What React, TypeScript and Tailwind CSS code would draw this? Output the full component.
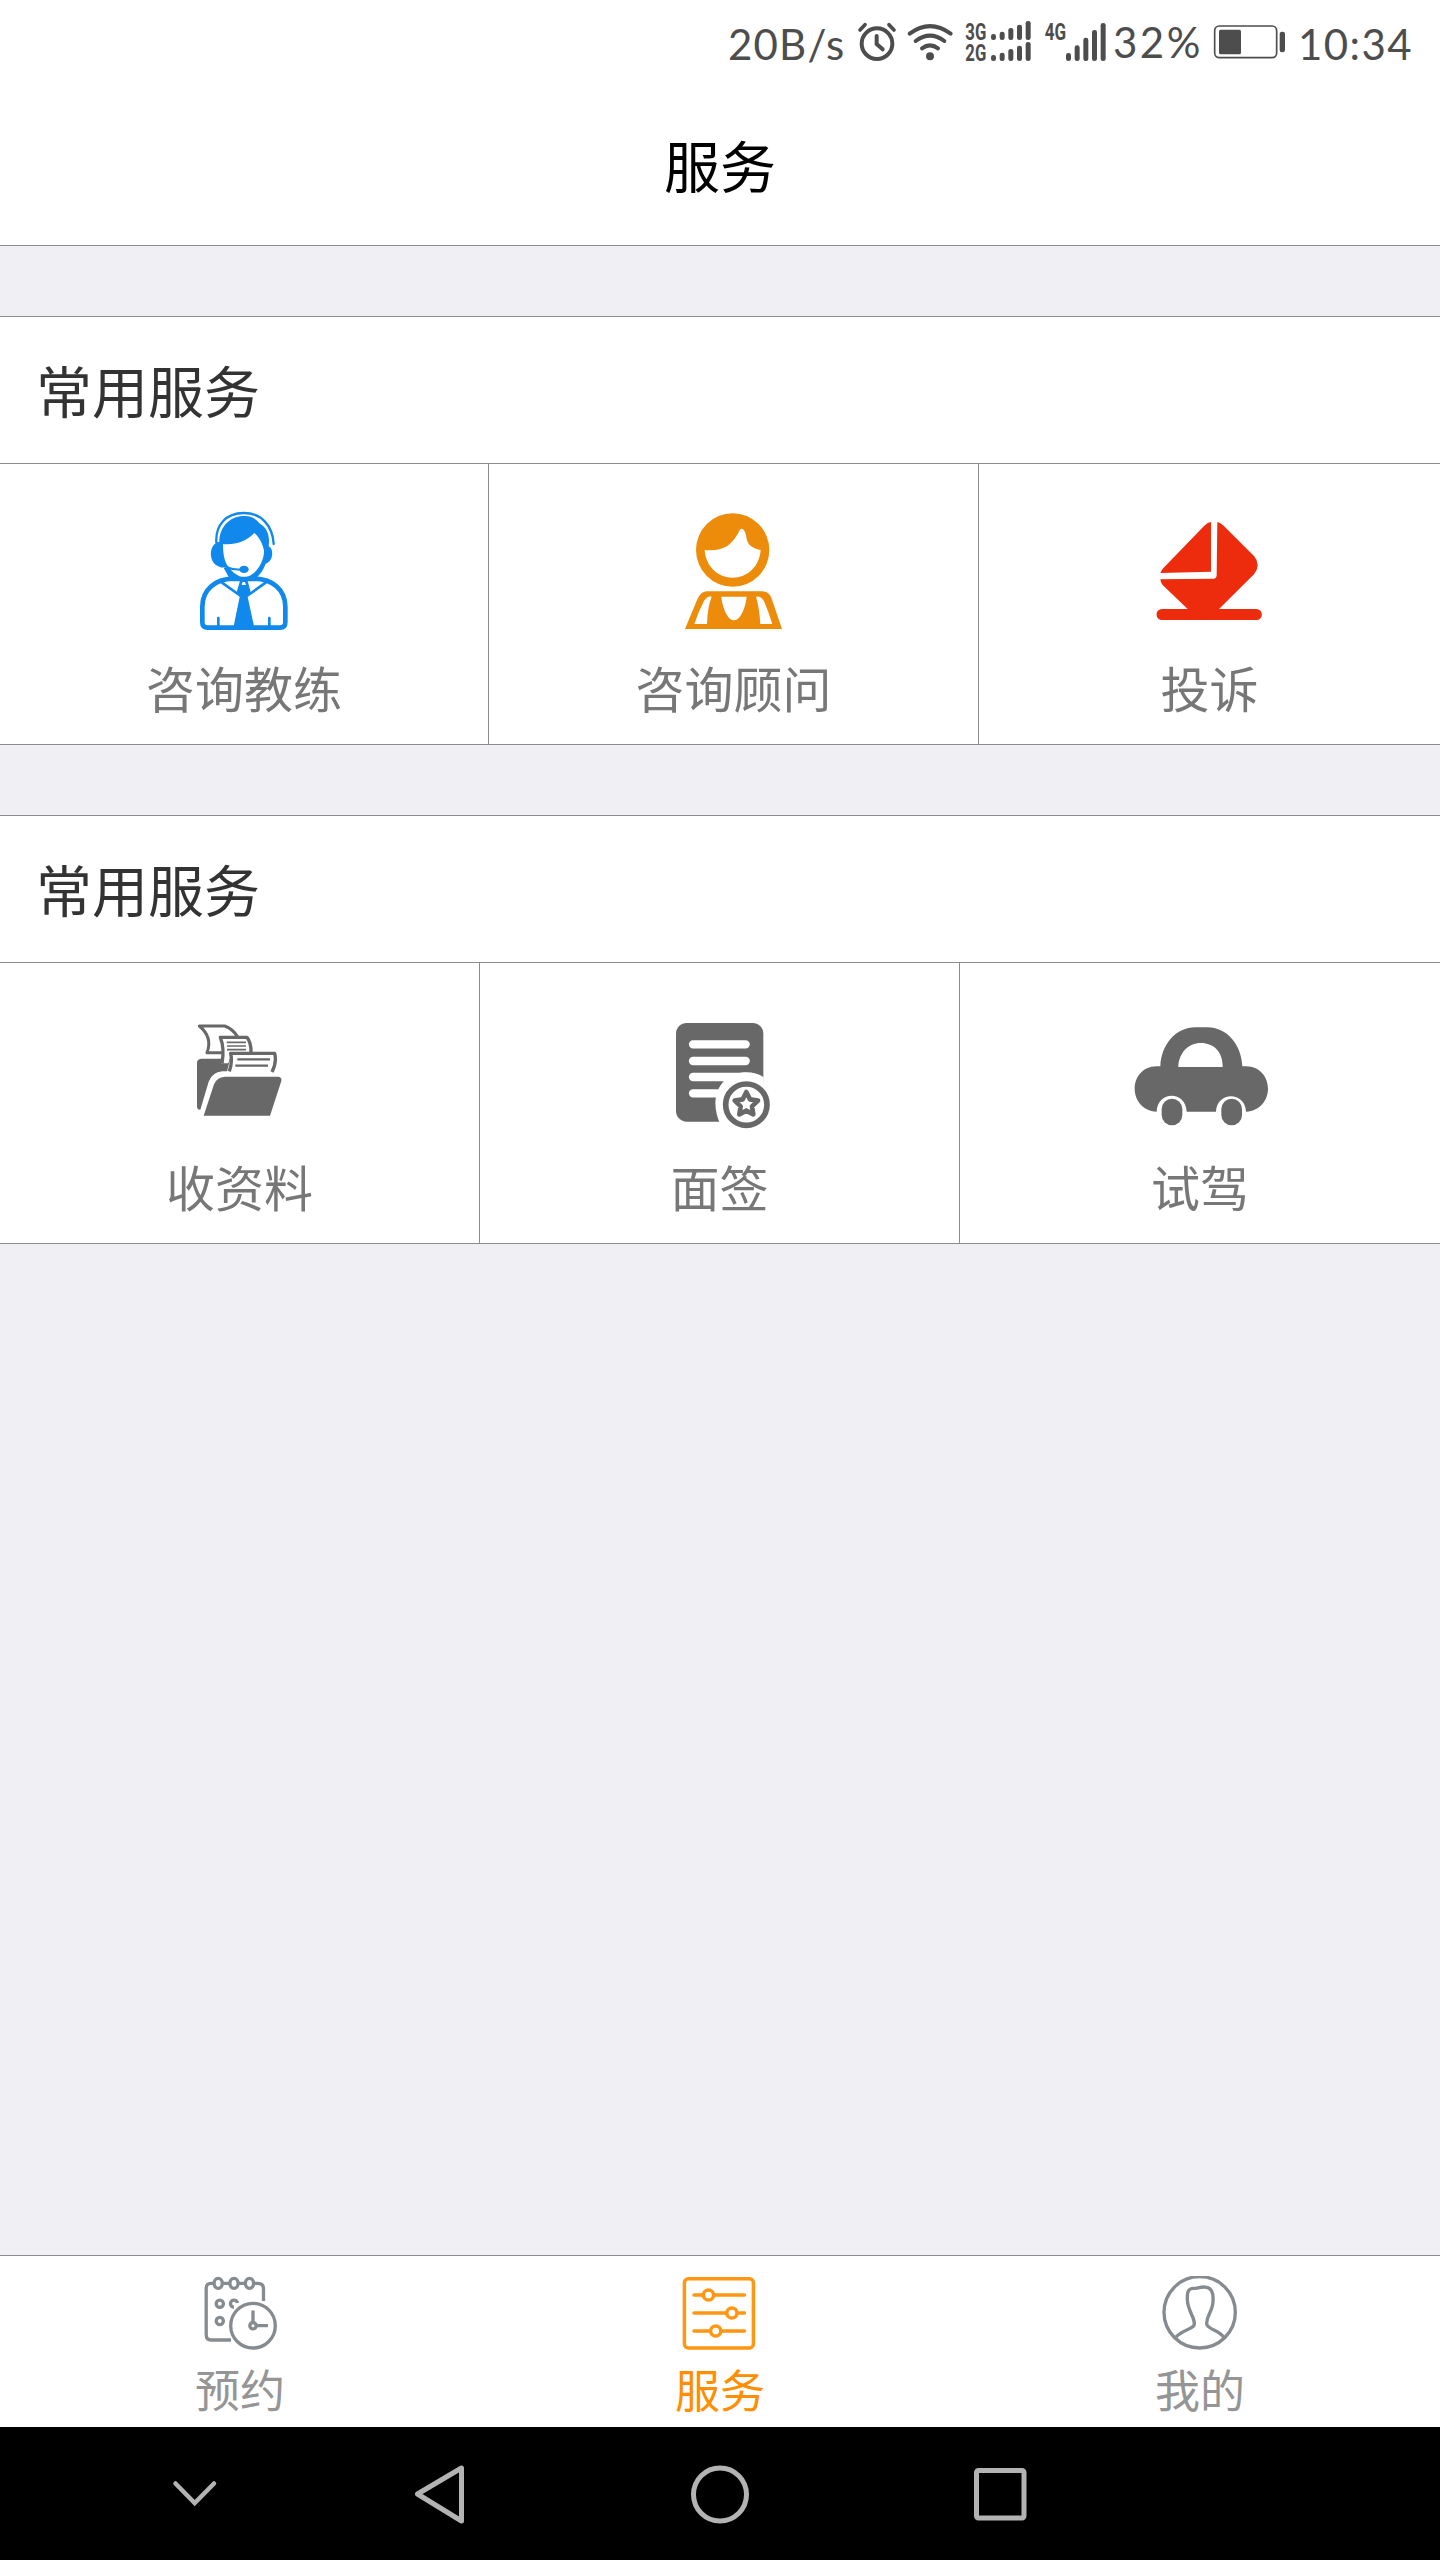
import type { ReactNode } from "react";

const StatusBar = () => (
  <div className="flex h-[90px] pl-[727px] text-[#4d4d4d] font-[Lato,sans-serif] text-[42px] leading-[89px] whitespace-nowrap">
    <span className="w-[128px] pl-px tracking-[1.2px]">20B/s</span>
    <svg className="w-[45px] h-[90px] shrink-0" viewBox="435 0 135 270" fill="none" stroke="currentColor" strokeLinecap="round">
      <circle cx="501" cy="131" r="46" strokeWidth="12" />
      <path d="M500 108V132L518 148" strokeWidth="12" />
      <path d="M450 90L465 74M552 90L537 74" strokeWidth="11" />
    </svg>
    <svg className="w-[60px] h-[90px] shrink-0" viewBox="570 0 180 270" fill="none" stroke="currentColor" strokeWidth="12" strokeLinecap="round">
      <path d="M599 101Q660 56 722 101M617 123Q660 91 703 123M636 145Q660 127 684 145" />
      <circle cx="660" cy="169" r="12" fill="currentColor" stroke="none" />
    </svg>
    <svg className="w-[75px] h-[90px] shrink-0" viewBox="750 0 225 270" fill="currentColor">
      <g className="font-[Roboto,sans-serif] font-bold" fontSize="71">
        <text x="766" y="120" textLength="63" lengthAdjust="spacingAndGlyphs">3G</text>
        <text x="766" y="183" textLength="63" lengthAdjust="spacingAndGlyphs">2G</text>
      </g>
      {[120, 183].map((y) => (
        <g key={y}>
          <rect x="843" y={y - 18} width="15" height="18" rx="7" />
          <rect x="869" y={y - 25} width="15" height="25" rx="7" />
          <rect x="895" y={y - 36} width="15" height="36" rx="7" />
          <rect x="921" y={y - 46} width="15" height="46" rx="7" />
          <rect x="947" y={y - 57} width="15" height="57" rx="7" />
        </g>
      ))}
    </svg>
    <svg className="w-[75px] h-[90px] shrink-0" viewBox="-15 0 225 270" fill="currentColor">
      <text x="14" y="120" textLength="64" lengthAdjust="spacingAndGlyphs" fontSize="71" className="font-[Roboto,sans-serif] font-bold">4G</text>
      <rect x="78" y="159" width="15" height="24" rx="7" />
      <rect x="104" y="136" width="15" height="47" rx="7" />
      <rect x="130" y="113" width="15" height="70" rx="7" />
      <rect x="156" y="90" width="15" height="93" rx="7" />
      <rect x="182" y="69" width="15" height="114" rx="7" />
    </svg>
    <span className="w-[98px] pl-[3px] leading-[85px] tracking-[2.5px]">32%</span>
    <svg className="w-[84px] h-[90px] shrink-0" viewBox="504 0 252 270" fill="none" stroke="currentColor">
      <rect x="524" y="78" width="186" height="95" rx="14" strokeWidth="5" />
      <rect x="537" y="89" width="66" height="74" rx="5" fill="currentColor" stroke="none" />
      <rect x="719" y="95" width="16" height="62" rx="7" fill="currentColor" stroke="none" />
    </svg>
    <span className="pl-[6px] tracking-[1.4px]">10:34</span>
  </div>
);

const CoachIcon = () => (
  <svg className="size-[150px]" viewBox="-33 0 450 450" fill="#1088ec">
    <path d="M109 157C106 105 138 69 191 69C246 69 278 109 281 162" fill="none" stroke="#1088ec" strokeWidth="7" strokeLinecap="round" />
    <path
      fillRule="evenodd"
      d="M118 155C119 108 151 78 193 78C219 78 231 91 240 101C263 114 270 139 266 169C281 174 282 213 257 221C251 239 240 253 231 262L193 270L148 264L131 234L145 229C155 246 175 261 191 262C225 262 254 213 252 181C247 157 234 138 223 129C197 156 165 165 129 162C129 193 134 215 144 229C137 233 126 234 118 230C83 220 85 160 118 155Z"
    />
    <path d="M137 231Q160 240 187 239" fill="none" stroke="#1088ec" strokeWidth="6" />
    <ellipse cx="192" cy="238" rx="14" ry="11" />
    <path d="M159 266C105 267 67 300 67 350V397Q67 413 83 413H300Q316 413 316 397V350C316 300 278 267 224 266" fill="none" stroke="#1088ec" strokeWidth="14" />
    <path d="M148 260H234L226 274H157Z" />
    <path d="M126 278L178 315M257 278L205 315M115 384V407M268 384V407" fill="none" stroke="#1088ec" strokeWidth="8" strokeLinecap="round" />
    <path d="M180 272H203L212 307L203 321L223 413H160L179 321L170 307Z" />
    <path d="M188 276H195L198 285H185Z" fill="#fff" />
  </svg>
);

const ConsultantIcon = () => (
  <svg className="size-[150px]" viewBox="-3 0 450 450" fill="#ed8c0a">
    <circle cx="218" cy="180" r="110" />
    <path d="M134 180C185 185 211 169 231 135C239 123 238 117 245 116C252 117 258 128 260 147C264 167 282 177 302 180C299 229 262 263 218 263C174 263 137 229 134 180Z" fill="#fff" />
    <path
      fillRule="evenodd"
      d="M139 304H307Q325 304 334 323L366 417H75L112 328Q122 306 139 304ZM155 320C145 318 139 323 132 333Q115 365 103 402H141Q142 353 155 320ZM184 320H260C257 353 241 391 222 391C203 391 187 353 184 320ZM288 320Q298 352 301 402H337Q326 366 312 334Q303 317 288 320Z"
    />
  </svg>
);

const ComplaintIcon = () => (
  <svg className="size-[150px]" viewBox="15 0 450 450" fill="#ec2c0d">
    <path d="M243 96V245L91 249Q93 241 101 233L223 107Q233 97 243 96Z" />
    <path d="M262 96Q271 98 281 107L372 198Q394 224 372 253L267 357H379A16 16 0 0 1 379 390H96A16 16 0 0 1 96 357H173L98 285Q91 276 91 268L250 266Q260 266 260 255Z" />
  </svg>
);

const FolderIcon = () => (
  <svg className="size-[150px]" viewBox="-15 -33 450 450" fill="#686868">
    <path d="M81 320V188Q81 177 94 176H181L171 214H157Q126 217 116 245L91 329Q82 330 81 320Z" />
    <path d="M88 78H164Q187 86 202 109L206 158H111Q129 112 88 78Z" fill="#fff" stroke="#686868" strokeWidth="9" strokeLinejoin="round" />
    <path d="M151 112H231Q245 128 243 158L183 162L175 190H153Q164 147 151 112Z" fill="#fff" />
    <path d="M156 190Q164 145 151 112H231Q244 128 243 158" fill="none" stroke="#686868" strokeWidth="10" strokeLinejoin="round" />
    <path d="M170 127H228M171 138H228M171 149H228" stroke="#686868" strokeWidth="5" />
    <path d="M178 214Q188 187 182 160H314Q321 186 306 216" fill="#fff" stroke="#686868" strokeWidth="10" strokeLinejoin="round" />
    <path d="M202 178H300M196 197H294" stroke="#686868" strokeWidth="7" />
    <path d="M165 230H324Q338 231 333 246L300 347H101L132 253Q140 232 165 230Z" />
  </svg>
);

const ContractIcon = () => (
  <svg className="size-[150px]" viewBox="-15 -33 450 450" fill="#686868">
    <rect x="78" y="69" width="262" height="296" rx="32" />
    <path d="M129 133H287M129 183H287M129 231H287M129 280H230" stroke="#fff" strokeWidth="25" strokeLinecap="round" />
    <path d="M341 232C311 211 259 211 226 239C190 272 190 322 208 367H345Z" fill="#fff" />
    <circle cx="289" cy="314" r="62" fill="#fff" stroke="#686868" strokeWidth="17" />
    <path d="M289 276L300 298L324 302L306 319L310 343L289 332L268 343L272 319L254 302L278 298Z" fill="#fff" stroke="#686868" strokeWidth="14" strokeLinejoin="round" />
  </svg>
);

const CarIcon = () => (
  <svg className="size-[150px]" viewBox="15 -33 450 450" fill="#686868">
    <path
      fillRule="evenodd"
      d="M121 199C124 131 170 82 225 82H263C318 82 364 131 367 199H378C465 201 467 329 378 335C376 273 290 273 288 335H200C198 271 112 271 110 335C21 329 23 201 110 199ZM175 201H308C309 157 282 129 243 129C204 129 176 160 175 201Z"
    />
    <rect x="125" y="296" width="62" height="80" rx="31" />
    <rect x="304" y="296" width="62" height="80" rx="31" />
  </svg>
);

const CalendarIcon = () => (
  <svg className="size-[76px]" viewBox="0 0 76 76" fill="none" stroke="#868b90" strokeWidth="3.3">
    <path d="M11.5 7.3H9Q4.2 7.3 4.2 12.5V58.5Q4.2 64 9 64H29M20.5 7.3H27.5M36.5 7.3H43M52 7.3H56Q61.5 7.3 61.5 13V25" />
    <ellipse cx="16.2" cy="7.3" rx="4.1" ry="5" />
    <ellipse cx="32" cy="7.3" rx="4.1" ry="5" />
    <ellipse cx="47.5" cy="7.3" rx="4.1" ry="5" />
    <circle cx="17.8" cy="27.7" r="3.6" />
    <circle cx="17.8" cy="45" r="3.6" />
    <path d="M32 31.3A3.6 3.6 0 1 1 35.6 27" />
    <circle cx="51" cy="49.7" r="22.3" />
    <circle cx="51" cy="49.7" r="3.2" />
    <path d="M51 34.5V46.5M54.2 49.7H66" />
  </svg>
);

const SlidersIcon = () => (
  <svg className="size-[76px]" viewBox="0 0 76 76" fill="#fff" stroke="#ff9713" strokeWidth="3.5">
    <rect x="2.4" y="2.7" width="69" height="69.3" rx="4" />
    <path d="M12 19H62.5M12 37H62.5M12 55H62.5" strokeLinecap="round" />
    <circle cx="26.5" cy="19" r="5.1" />
    <circle cx="49.9" cy="37" r="5.1" />
    <circle cx="33.7" cy="55" r="5.1" />
  </svg>
);

const ProfileIcon = () => (
  <svg className="size-[76px]" viewBox="126 108 228 228" fill="none" stroke="#868b90" strokeWidth="10">
    <circle cx="239" cy="217" r="107" />
    <path d="M168 291C187 270 207 271 221 258C231 240 202 214 202 178C201 152 207 144 223 145C236 146 239 140 253 141C274 141 281 158 279 184C279 216 254 232 261 255C270 270 294 270 311 291" />
  </svg>
);

interface ServiceCellProps {
  icon: ReactNode;
  label: string;
  className?: string;
}

const ServiceCell = ({ icon, label, className = "" }: ServiceCellProps) => (
  <div className={`flex flex-col items-center h-[280px] pt-[26px] border-[#8c8c8c] ${className}`}>
    {icon}
    <span className="mt-[11px] text-[49px] leading-[72px] text-[#777]">{label}</span>
  </div>
);

interface ServiceSectionProps {
  title: string;
  children: ReactNode;
}

const ServiceSection = ({ title, children }: ServiceSectionProps) => (
  <section className="mt-[70px] bg-white border-y border-[#8c8c8c]">
    <h2 className="h-[147px] pl-[36px] border-b border-[#8c8c8c] text-[56px] leading-[143px] text-[#333]">{title}</h2>
    <div className="flex">{children}</div>
  </section>
);

const tabs = [
  { label: "预约", icon: <CalendarIcon />, active: false },
  { label: "服务", icon: <SlidersIcon />, active: true },
  { label: "我的", icon: <ProfileIcon />, active: false },
];

const App = () => {
  return (
    <div className="flex flex-col w-[1440px] h-[2560px] bg-[#efeff4] font-['Noto_Sans_CJK_SC',sans-serif]">
      <header className="h-[246px] bg-white border-b border-[#8c8c8c]">
        <StatusBar />
        <h1 className="text-center text-[56px] leading-[147px] text-black">服务</h1>
      </header>

      <main className="flex-1">
        <ServiceSection title="常用服务">
          <ServiceCell className="w-[489px] border-r" icon={<CoachIcon />} label="咨询教练" />
          <ServiceCell className="w-[490px] border-r" icon={<ConsultantIcon />} label="咨询顾问" />
          <ServiceCell className="flex-1" icon={<ComplaintIcon />} label="投诉" />
        </ServiceSection>
        <ServiceSection title="常用服务">
          <ServiceCell className="w-[480px] border-r" icon={<FolderIcon />} label="收资料" />
          <ServiceCell className="w-[480px] border-r" icon={<ContractIcon />} label="面签" />
          <ServiceCell className="flex-1" icon={<CarIcon />} label="试驾" />
        </ServiceSection>
      </main>

      <nav className="grid grid-cols-3 h-[172px] bg-white border-t border-[#8c8c91]">
        {tabs.map((tab) => (
          <div key={tab.label} className="flex flex-col items-center pt-5">
            {tab.icon}
            <span className={`mt-[7px] text-[45px] leading-[60px] ${tab.active ? "text-[#ff8f00]" : "text-[#959595]"}`}>
              {tab.label}
            </span>
          </div>
        ))}
      </nav>

      <div className="flex items-center h-[133px] pl-[155px] bg-black">
        <svg className="size-20" viewBox="0 0 80 80" fill="none" stroke="#b3b3b3" strokeWidth="4.5" strokeLinecap="round">
          <path d="M20.5 29.5L39.7 49L59 29.5" />
        </svg>
        <svg className="size-20 ml-[165px]" viewBox="0 0 80 80" fill="none" stroke="#b3b3b3" strokeWidth="5" strokeLinejoin="round">
          <path d="M17.5 40L61.5 14V67Z" />
        </svg>
        <svg className="size-20 ml-[200px]" viewBox="0 0 80 80" fill="none" stroke="#b3b3b3" strokeWidth="5">
          <circle cx="40" cy="40.5" r="26.5" />
        </svg>
        <svg className="size-20 ml-[200px]" viewBox="0 0 80 80" fill="none" stroke="#b3b3b3" strokeWidth="5">
          <rect x="16.5" y="16.5" width="47.5" height="47.5" rx="2" />
        </svg>
      </div>
    </div>
  );
};

export default App;
